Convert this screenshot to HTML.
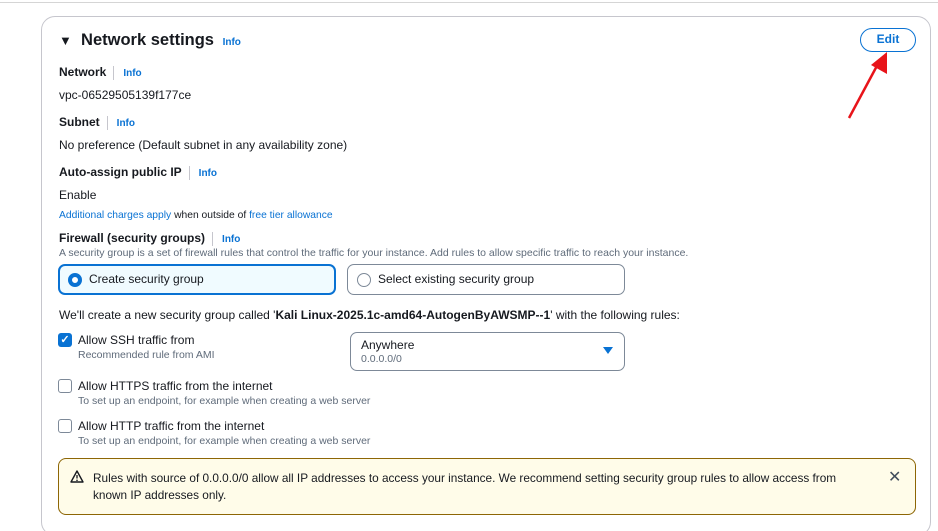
<!DOCTYPE html><html><head><style>
html,body{margin:0;width:938px;height:531px;overflow:hidden}
body{background:#fff;font-family:"Liberation Sans",sans-serif;color:#16191f;position:relative}
.a{position:absolute;white-space:nowrap}
.card{position:absolute;left:41px;top:16px;width:890px;height:520px;border:1px solid #c6c6cd;border-radius:14px;box-sizing:border-box}
.lb{font-weight:bold;font-size:12px}
.info{color:#0972d3;font-weight:bold;font-size:10px}
.sep{display:inline-block;width:1px;height:14px;background:#c6c6cd;vertical-align:middle;margin:0 9px 0 7px}
.t{font-size:12px}
.s{font-size:10.5px;color:#5f6b7a}
.lnk{color:#0972d3}
.cb{position:absolute;width:12px;height:12px;border:1px solid #7d8998;border-radius:3px;background:#fff}
</style></head><body>
<div class="a" style="left:0;top:2px;width:938px;height:1px;background:#d5d5d5"></div>
<div class="card"></div>
<div class="a" style="left:59px;top:31px;font-size:16.5px;font-weight:bold"><span style="font-size:13px">▼</span>&nbsp; Network settings <span class="info" style="margin-left:4px">Info</span></div>
<div class="a" style="left:860px;top:28px;width:56px;height:24px;border:1.5px solid #0972d3;border-radius:14px;box-sizing:border-box;text-align:center;line-height:21px;color:#0972d3;font-weight:bold;font-size:12px">Edit</div>
<svg class="a" style="left:845px;top:50px" width="50" height="72"><line x1="4" y1="68" x2="34" y2="12" stroke="#e8141a" stroke-width="2.5"/><polygon points="42,2 42,24 26,15" fill="#e8141a"/></svg>
<div class="a lb" style="left:59px;top:65px">Network<span class="sep"></span><span class="info">Info</span></div>
<div class="a t" style="left:59px;top:88px">vpc-06529505139f177ce</div>
<div class="a lb" style="left:59px;top:115px">Subnet<span class="sep"></span><span class="info">Info</span></div>
<div class="a t" style="left:59px;top:138px">No preference (Default subnet in any availability zone)</div>
<div class="a lb" style="left:59px;top:165px">Auto-assign public IP<span class="sep"></span><span class="info">Info</span></div>
<div class="a t" style="left:59px;top:188px">Enable</div>
<div class="a" style="left:59px;top:210px;font-size:10.3px"><span class="lnk">Additional charges apply</span> when outside of <span class="lnk">free tier allowance</span></div>
<div class="a lb" style="left:59px;top:231px">Firewall (security groups)<span class="sep"></span><span class="info">Info</span></div>
<div class="a s" style="left:59px;top:247px">A security group is a set of firewall rules that control the traffic for your instance. Add rules to allow specific traffic to reach your instance.</div>
<div class="a" style="left:58px;top:264px;width:278px;height:31px;border:2px solid #0972d3;background:#f0fbff;border-radius:7px;box-sizing:border-box"></div>
<div class="a" style="left:68px;top:273px;width:6px;height:6px;border:4px solid #0972d3;border-radius:50%;background:#fff"></div>
<div class="a t" style="left:89px;top:272px">Create security group</div>
<div class="a" style="left:347px;top:264px;width:278px;height:31px;border:1px solid #7d8998;border-radius:7px;box-sizing:border-box"></div>
<div class="a" style="left:357px;top:273px;width:12px;height:12px;border:1px solid #7d8998;border-radius:50%"></div>
<div class="a t" style="left:378px;top:272px">Select existing security group</div>
<div class="a t" style="left:59px;top:308px">We'll create a new security group called '<b>Kali Linux-2025.1c-amd64-AutogenByAWSMP--1</b>' with the following rules:</div>
<div class="a" style="left:58px;top:333px;width:14px;height:14px;background:#0972d3;border-radius:3px;color:#fff;font-size:11px;text-align:center;line-height:14px;font-weight:bold">✓</div>
<div class="a t" style="left:78px;top:333px">Allow SSH traffic from</div>
<div class="a s" style="left:78px;top:349px">Recommended rule from AMI</div>
<div class="a" style="left:350px;top:332px;width:275px;height:39px;border:1px solid #7d8998;border-radius:7px;box-sizing:border-box"></div>
<div class="a t" style="left:361px;top:338px">Anywhere</div>
<div class="a s" style="left:361px;top:353px">0.0.0.0/0</div>
<div class="a" style="left:603px;top:347px;width:0;height:0;border-left:5px solid transparent;border-right:5px solid transparent;border-top:7px solid #0972d3"></div>
<div class="cb" style="left:58px;top:379px"></div>
<div class="a t" style="left:78px;top:379px">Allow HTTPS traffic from the internet</div>
<div class="a s" style="left:78px;top:395px">To set up an endpoint, for example when creating a web server</div>
<div class="cb" style="left:58px;top:419px"></div>
<div class="a t" style="left:78px;top:419px">Allow HTTP traffic from the internet</div>
<div class="a s" style="left:78px;top:435px">To set up an endpoint, for example when creating a web server</div>
<div class="a" style="left:58px;top:458px;width:858px;height:57px;border:1px solid #8d6605;background:#fffce9;border-radius:8px;box-sizing:border-box"></div>
<svg class="a" style="left:70px;top:470px" width="14" height="13"><path d="M7 1L13 12H1Z" fill="none" stroke="#16191f" stroke-width="1.4" stroke-linejoin="round"/><line x1="7" y1="5" x2="7" y2="8.5" stroke="#16191f" stroke-width="1.3"/><circle cx="7" cy="10.3" r=".8" fill="#16191f"/></svg>
<div class="a" style="left:93px;top:470px;font-size:11.8px;line-height:17px">Rules with source of 0.0.0.0/0 allow all IP addresses to access your instance. We recommend setting security group rules to allow access from<br>known IP addresses only.</div>
<div class="a" style="left:888px;top:467px;font-size:16px;color:#414d5c">✕</div>
</body></html>
